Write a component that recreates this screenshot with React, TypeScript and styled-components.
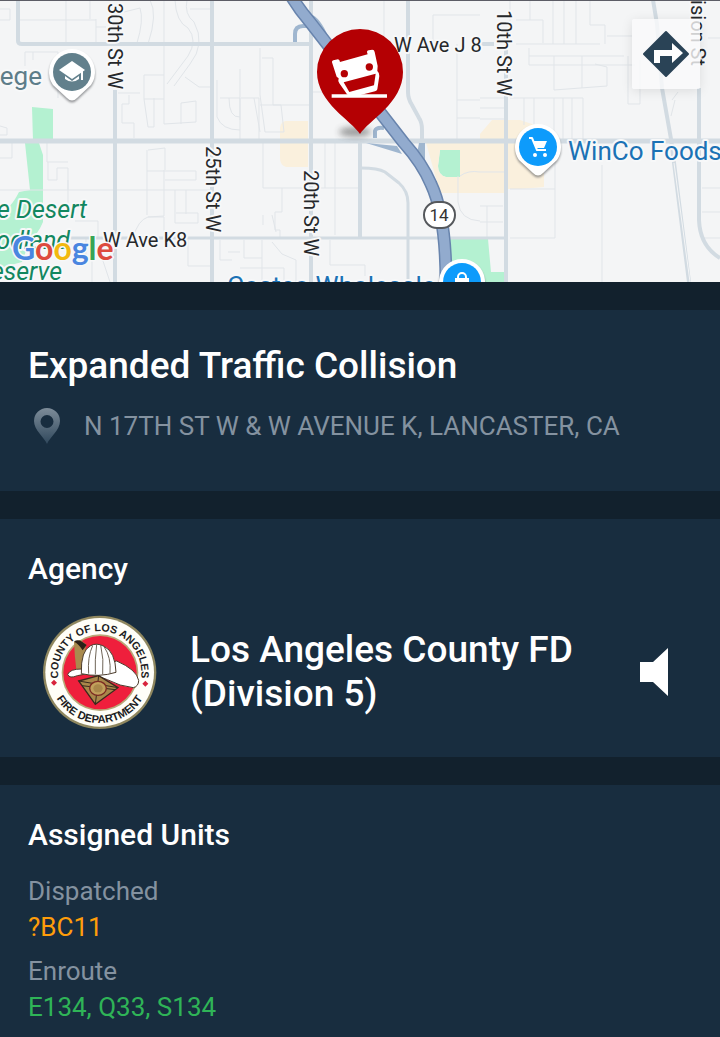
import styled, { createGlobalStyle } from "styled-components";

const colors = {
  page: "#12212d",
  panel: "#182d3f",
  text: "#ffffff",
  muted: "#8492a0",
  orange: "#ff9d0a",
  green: "#2fb457",
};

const GlobalStyle = createGlobalStyle`
  * {
    box-sizing: border-box;
  }
  body {
    margin: 0;
    background: ${colors.page};
    color: ${colors.text};
    font-family: Roboto, "Liberation Sans", sans-serif;
  }
  h1, h2, h3, p, dl, dd {
    margin: 0;
  }
`;

const Page = styled.main`
  display: flex;
  flex-direction: column;
  gap: 28px;
  min-height: 100vh;
`;

const MapArea = styled.header`
  position: relative;
  height: 282px;
  overflow: hidden;
  background: #f4f5f6;
  border-top: 1px solid #5c5d66;

  > svg {
    display: block;
    width: 100%;
    height: 282px;
    margin-top: -1px;
  }
`;

const DirectionsButton = styled.button`
  position: absolute;
  top: 18px;
  right: 20px;
  width: 68px;
  height: 70px;
  padding: 0;
  display: flex;
  align-items: center;
  justify-content: center;
  border: 0;
  border-radius: 2px;
  background: rgba(250, 250, 251, 0.8);
  box-shadow: 0 2px 12px rgba(0, 0, 0, 0.1);
  cursor: pointer;
`;

const Panel = styled.section<{ $grow?: boolean }>`
  padding: 32px 28px 28px;
  background: ${colors.panel};
  flex-grow: ${({ $grow }) => ($grow ? 1 : 0)};
`;

const Title = styled.h1`
  font-size: 37px;
  font-weight: 500;
  line-height: 48px;
`;

const Address = styled.p`
  display: flex;
  align-items: center;
  gap: 24px;
  margin-top: 16px;
  padding: 0 0 17px 6px;
  font-size: 26px;
  line-height: 40px;
  color: ${colors.muted};

  svg {
    flex: none;
  }
`;

const Heading = styled.h2`
  font-size: 30px;
  font-weight: 500;
  line-height: 36px;
`;

const AgencyRow = styled.div`
  display: flex;
  align-items: center;
  gap: 33px;
  margin-top: 28px;
  padding: 0 24px 0 14px;
`;

const AgencyName = styled.h3`
  flex: 1;
  font-size: 37px;
  font-weight: 500;
  line-height: 44px;
`;

const SpeakerButton = styled.button`
  display: flex;
  padding: 0;
  border: 0;
  background: none;
  cursor: pointer;
`;

const UnitList = styled.dl`
  display: flex;
  flex-direction: column;
  gap: 8px;
  margin-top: 20px;
  font-size: 26px;
  line-height: 36px;
`;

const UnitStatus = styled.dt`
  color: ${colors.muted};
`;

const Units = styled.dd<{ $color: string }>`
  color: ${({ $color }) => $color};
`;

const RoadLabel = styled.text`
  font-size: 20px;
  fill: #26282b;
  stroke: #f7f8f9;
  stroke-width: 4px;
  stroke-linejoin: round;
  paint-order: stroke;
`;

const PlaceLabel = styled(RoadLabel)<{ $color: string; $italic?: boolean }>`
  font-size: ${({ $italic }) => ($italic ? "25px" : "26px")};
  font-style: ${({ $italic }) => ($italic ? "italic" : "normal")};
  fill: ${({ $color }) => $color};
`;

const Logo = styled.text`
  font-family: Lato, sans-serif;
  font-size: 32px;
  font-weight: 700;
  stroke: #f7f8f9;
  stroke-width: 3px;
  stroke-linejoin: round;
  paint-order: stroke;
`;

const SealText = styled.text`
  font-family: "Liberation Sans", Arial, sans-serif;
  font-weight: 700;
  fill: #1c1c22;
  text-anchor: middle;
`;

const verticalLabels = [
  { label: "30th St W", x: 108, y: 3 },
  { label: "25th St W", x: 206, y: 146 },
  { label: "20th St W", x: 304, y: 170 },
  { label: "10th St W", x: 497, y: 10 },
];

const minorStreets = [
  // north west
  "M0 9H10V20H0M18 20H96M66 0V44M90 0V19M96 19V44M96 27H106M124 12L140 8Q144 20 137 43M150 0Q158 14 148 44",
  "M164 0V124M175 0Q176 22 188 28Q198 40 188 56L167 84M187 0Q184 14 194 22Q206 44 190 64L174 86M190 9H212M185 77L199 87H212",
  "M25 52H58M25 52V66M33 52V60M58 52V98M118 93H140M144 75H164M144 75V99H164M129 95V104H122V123H134V138M144 99L148 127H154V98M181 124V103L196 101V122L164 124M217 80V117Q222 130 240 130M220 98H240V120M229 98Q229 118 240 117",
  "M0 126L7 128V135H0M47 143V162H68M48 162V180H57V168H68V190M68 180V220M0 158H12V143M0 190H212",
  // below W Ave K
  "M148 150L165 148V170M147 150V215M147 171H196V180H165M164 170V216L148 217M175 190V223H198V213H176M186 190V214M133 238Q138 220 148 217H164M164 217V238M75 221H98V238M86 238V256M92 260V282M102 258L110 282M188 240V266H212M220 240V260H232M228 252H240",
  "M263 143V188H360M282 188V212H275V230H280V238M335 143V235M325 143V188M263 215V225M272 215L276 232M262 240V282M244 240V258H262M272 242L282 254L296 260V282M330 240V265H365V276M240 268H284V282",
  // centre north
  "M240 69V140M260 48V95L265 132H284L281 105H260M262 58H273V105M273 105H312M241 98H259V140M312 92H326M254 98L260 132",
  "M433 15H480M433 15V44M457 44V140M457 100H480M457 118H480M384 44V0",
  // 10th St W and east
  "M516 20H543V43M516 44H600M510 0V44M530 0V20M553 0V44M564 0V44M576 0V44M590 0V25H605V44M529 48V65H635M529 56H624M554 56V90L607 86V67L595 64M582 56V88M607 36H632M628 56V104H640V60",
  "M510 98H583V140M524 98V125M534 98V140M554 98V140M563 98V140M572 98V140M480 98H504M480 108H504M480 119H504",
  "M510 189H555V143M555 189V238H510M602 165V282M480 206H503M487 206V238M480 222H503M708 38H720M702 188H720M702 212H720M702 238H720M672 100L678 92M671 116L675 100",
  "M458 176V202Q460 220 480 221M460 176Q468 170 480 172H504",
];

const pinShape = "M-19 13L-5 26Q0 31 5 26L19 13A23 23 0 1 0 -19 13Z";

const MapPin = ({
  x,
  y,
  color,
  children,
}: {
  x: number;
  y: number;
  color: string;
  children: React.ReactNode;
}) => (
  <g transform={`translate(${x} ${y})`}>
    <path
      d={pinShape}
      fill="#55585c"
      opacity=".6"
      filter="url(#pinShadow)"
      transform="translate(0 2)"
    />
    <path d={pinShape} fill="#fff" />
    <circle r="19" fill={color} />
    {children}
  </g>
);

const IncidentPin = () => (
  <g>
    <ellipse
      cx="355"
      cy="132"
      rx="16"
      ry="5"
      fill="#333"
      opacity=".45"
      filter="url(#soft)"
    />
    <path
      d="M360 134C352 121 317 103 317 72A43 43 0 0 1 403 72C403 103 368 121 360 134Z"
      fill="#b40003"
    />
    <g transform="translate(240 0) scale(.3333)">
      <path
        d="M276 187Q275 182 280 181L294 178Q299 178 300 186L383 163L381 156Q381 152 386 151L397 149Q403 149 404 156L413 198L412 213Q419 219 418 228L412 268Q411 273 405 274L350 288L326 286Q321 284 318 278L298 250Q293 243 296 235L290 230Z"
        fill="#fff"
      />
      <path d="M311 247L407 221L402 256L328 276Z" fill="#b40003" />
      <circle cx="313" cy="221" r="11" fill="#b40003" />
      <circle cx="388" cy="201" r="11" fill="#b40003" />
      <path d="M275 283H441V293H275Z" fill="#fff" />
    </g>
  </g>
);

const IncidentMap = () => (
  <svg
    viewBox="0 0 720 282"
    preserveAspectRatio="xMidYMid slice"
    role="img"
    aria-label="Incident location map"
  >
    <defs>
      <filter id="soft" x="-50%" y="-100%" width="200%" height="300%">
        <feGaussianBlur stdDeviation="3" />
      </filter>
      <filter id="pinShadow" x="-20%" y="-20%" width="140%" height="140%">
        <feGaussianBlur stdDeviation="1" />
      </filter>
    </defs>
    {/* parks */}
    <g fill="#b4f1d1">
      <path d="M32 107L53 109V141H33Z" />
      <path d="M25 143H39L43 155V222Q38 234 30 240L22 262L0 268V212Q10 210 19 192L30 190Z" />
      <path d="M440 150H460V177H446Q438 175 438 166Z" />
      <path d="M450 239H488L491 272H505V282H450Z" />
    </g>
    {/* commercial blocks */}
    <g fill="#faf0dd">
      <path d="M286 121H308V167H286Q280 165 280 158V128Q281 121 286 121Z" />
      <path
        fillRule="evenodd"
        d="M425 139L440 193H505V189H520L544 187V128L520 120H492L480 134V139ZM440 150H460V177H446Q438 175 438 166Z"
      />
    </g>
    <g fill="none" stroke="#e1e5e9" strokeWidth="1">
      {minorStreets.map((d) => (
        <path key={d} d={d} />
      ))}
    </g>
    {/* main streets */}
    <g fill="none" stroke="#d2dbe2" strokeWidth="4">
      <path d="M18 0V41Q18 44 22 44H312" />
      <path d="M0 141H720" strokeWidth="5" />
      <path d="M70 238H505" strokeWidth="3" />
      <path d="M115 90V282M212 0V282M311 0V282M506 30V282" />
      <path d="M408 0V92Q408 99 412 105L419 118Q422 122 422 130V141" />
      <path d="M360 141V237" />
      <path d="M361 168Q378 168 385 172L399 183Q408 191 408 203V279" strokeWidth="3" />
      <path d="M480 44H494" />
      <path d="M653 0L657 24L662 88L671 139L689 282M699 88V220Q700 246 720 258" />
    </g>
    <path d="M674 163L690 282" stroke="#f4f5f6" strokeWidth="1" />
    {/* freeway ramps */}
    <g fill="none" stroke="#9fb6cf" strokeWidth="4">
      <path d="M295 42V34Q295 26 303 26H311" />
      <path d="M312 17Q321 22 328 42" />
      <path d="M375 138V131Q376 127 384 128" />
    </g>
    <path
      d="M388 123L407 139H398ZM366 143L402 154L397 146ZM419 143H425V164L417 154Z"
      fill="#9fb6cf"
    />
    <path
      d="M290 -6Q298 8 310 22L404 143Q422 163 431 184Q446 216 446 282"
      fill="none"
      stroke="#6884ad"
      strokeWidth="13"
    />
    <path
      d="M290 -6Q298 8 310 22L404 143Q422 163 431 184Q446 216 446 282"
      fill="none"
      stroke="#92abce"
      strokeWidth="10"
    />
    <rect
      x="424"
      y="202"
      width="31"
      height="26"
      rx="13"
      fill="#fff"
      stroke="#55585c"
      strokeWidth="2"
    />
    <text x="439" y="221" textAnchor="middle" fontSize="17" fill="#333">
      14
    </text>

    {verticalLabels.map(({ label, x, y }) => (
      <RoadLabel key={label} transform={`translate(${x} ${y}) rotate(90)`}>
        {label}
      </RoadLabel>
    ))}
    <RoadLabel transform="translate(691 66) rotate(90)" textAnchor="end">
      Division St
    </RoadLabel>
    <RoadLabel x="394" y="52">
      W Ave J 8
    </RoadLabel>
    <RoadLabel x="103" y="247">
      W Ave K8
    </RoadLabel>

    <PlaceLabel $color="#5d7d89" x="42" y="85" textAnchor="end">
      College
    </PlaceLabel>
    <PlaceLabel $color="#1b72b5" x="568" y="160">
      WinCo Foods
    </PlaceLabel>
    <PlaceLabel $color="#1b72b5" x="227" y="295">
      Costco Wholesale
    </PlaceLabel>
    <PlaceLabel $color="#12875f" $italic x="87" y="218" textAnchor="end">
      Prime Desert
    </PlaceLabel>
    <PlaceLabel $color="#12875f" $italic x="70" y="249" textAnchor="end">
      Woodland
    </PlaceLabel>
    <PlaceLabel $color="#12875f" $italic x="62" y="280" textAnchor="end">
      Preserve
    </PlaceLabel>

    <MapPin x={72} y={72} color="#62808c">
      <path d="M-13 -2L0 -11L13 -2L0 7Z" fill="#fff" />
      <path d="M-7 4L0 9L7 4V7Q0 12 -7 7Z" fill="#fff" />
      <path d="M10 -2V8" stroke="#fff" strokeWidth="2" />
    </MapPin>
    <MapPin x={538} y={147} color="#0d9bfb">
      <path
        d="M-9 -9H-6L-1 3H8"
        fill="none"
        stroke="#fff"
        strokeWidth="2"
        strokeLinejoin="round"
      />
      <path d="M-5 -6H9L6 1H-2Z" fill="#fff" />
      <circle cx="-3" cy="8" r="2" fill="#fff" />
      <circle cx="7" cy="8" r="2" fill="#fff" />
    </MapPin>
    <MapPin x={462} y={282} color="#0d9bfb">
      <path d="M-7 -4H7V8H-7Z" fill="#fff" />
      <path
        d="M-4 -3V-5A4 4 0 0 1 4 -5V-3"
        fill="none"
        stroke="#fff"
        strokeWidth="2"
      />
    </MapPin>
    <IncidentPin />

    <Logo x="12" y="260">
      <tspan fill="#4a86e0">G</tspan>
      <tspan fill="#dd4b3e">o</tspan>
      <tspan fill="#f2b90f">o</tspan>
      <tspan fill="#4a86e0">g</tspan>
      <tspan fill="#38a455">l</tspan>
      <tspan fill="#dd4b3e">e</tspan>
    </Logo>
  </svg>
);

const DirectionsIcon = () => (
  <svg width="48" height="48" viewBox="0 0 48 48" aria-hidden="true">
    <path
      d="M24 2L46 24L24 46L2 24Z"
      fill="#2a4356"
      stroke="#2a4356"
      strokeWidth="2"
      strokeLinejoin="round"
    />
    <path d="M12 33V20H30V13L41 23L30 33V26H18V33Z" fill="#fff" />
  </svg>
);

const LocationIcon = () => (
  <svg width="26" height="36" viewBox="0 0 26 36" aria-hidden="true">
    <defs>
      <linearGradient id="fade" x1="0" y1="0" x2="0" y2="1">
        <stop offset="0" stopColor="#7d8c99" />
        <stop offset="1" stopColor="#30485c" />
      </linearGradient>
    </defs>
    <path
      fill="url(#fade)"
      fillRule="evenodd"
      d="M13 36C10 29 0 22 0 13A13 13 0 0 1 26 13C26 22 16 29 13 36ZM13 7A6 6 0 1 0 13 20A6 6 0 1 0 13 7Z"
    />
  </svg>
);

const AgencySeal = () => (
  <svg
    width="115"
    height="114"
    viewBox="66 44 345 342"
    role="img"
    aria-label="County of Los Angeles Fire Department seal"
  >
    <defs>
      <path id="sealTop" d="M151 306A125 125 0 1 1 327 306" />
      <path id="sealBottom" d="M89 218A150 150 0 0 0 389 218" />
    </defs>
    <circle cx="239" cy="216" r="170" fill="#8f875f" />
    <circle cx="239" cy="216" r="163" fill="#fffef8" />
    <circle cx="240" cy="217" r="115" fill="#b9a878" />
    <circle cx="240" cy="217" r="110" fill="#ef1f3c" />
    <SealText fontSize="32">
      <textPath href="#sealTop" startOffset="50%">
        COUNTY OF LOS ANGELES
      </textPath>
    </SealText>
    <SealText fontSize="33">
      <textPath href="#sealBottom" startOffset="50%">
        FIRE DEPARTMENT
      </textPath>
    </SealText>
    <path
      d="M102 238L111 247L102 256L93 247ZM376 241L385 250L376 259L367 250Z"
      fill="#d8243c"
    />
    {/* helmet */}
    <path d="M162 124L182 120L198 132L190 222L170 218Q164 170 162 124Z" fill="#a98a4e" />
    <path d="M162 124Q172 116 186 124L200 134L188 150Q176 130 162 124Z" fill="#2b2018" />
    <path
      d="M143 222Q150 206 184 206L290 182Q350 208 356 240Q356 258 340 262Q300 258 262 238Q210 214 172 226Q148 236 143 222Z"
      fill="#fff"
      stroke="#4b3b2c"
      strokeWidth="3"
    />
    <path
      d="M184 220Q182 150 212 136Q230 126 252 138Q286 154 288 216Q236 232 184 220Z"
      fill="#fff"
      stroke="#4b3b2c"
      strokeWidth="3"
    />
    <path
      d="M218 136Q202 170 206 220M230 132Q224 180 226 222M242 134Q252 176 248 222M252 139Q274 170 270 218"
      fill="none"
      stroke="#6f6558"
      strokeWidth="3"
    />
    {/* maltese shield */}
    <path
      d="M176 242L236 226L294 262L226 312Z"
      fill="#a9874a"
      stroke="#3a2a1c"
      strokeWidth="4"
    />
    <path d="M176 242L294 262M236 226L226 312M186 256L286 268" stroke="#3a2a1c" strokeWidth="3" />
    <ellipse cx="234" cy="264" rx="25" ry="21" fill="#c2a05c" stroke="#7b2a22" strokeWidth="4" />
    <ellipse cx="234" cy="264" rx="14" ry="12" fill="#a9874a" />
  </svg>
);

const SpeakerIcon = () => (
  <svg width="28" height="48" viewBox="0 0 28 48" aria-hidden="true">
    <path d="M0 14H13L28 0V48L13 34H0Z" fill="#fff" />
  </svg>
);

const unitGroups = [
  { status: "Dispatched", units: "?BC11", color: colors.orange },
  { status: "Enroute", units: "E134, Q33, S134", color: colors.green },
];

const App = () => {
  return (
    <>
      <GlobalStyle />
      <Page>
        <MapArea>
          <IncidentMap />
          <DirectionsButton type="button" aria-label="Directions">
            <DirectionsIcon />
          </DirectionsButton>
        </MapArea>

        <Panel>
          <Title>Expanded Traffic Collision</Title>
          <Address>
            <LocationIcon />N 17TH ST W &amp; W AVENUE K, LANCASTER, CA
          </Address>
        </Panel>

        <Panel>
          <Heading>Agency</Heading>
          <AgencyRow>
            <AgencySeal />
            <AgencyName>
              Los Angeles County FD
              <br />
              (Division 5)
            </AgencyName>
            <SpeakerButton type="button" aria-label="Listen">
              <SpeakerIcon />
            </SpeakerButton>
          </AgencyRow>
        </Panel>

        <Panel $grow>
          <Heading>Assigned Units</Heading>
          <UnitList>
            {unitGroups.map(({ status, units, color }) => (
              <div key={status}>
                <UnitStatus>{status}</UnitStatus>
                <Units $color={color}>{units}</Units>
              </div>
            ))}
          </UnitList>
        </Panel>
      </Page>
    </>
  );
};

export default App;
